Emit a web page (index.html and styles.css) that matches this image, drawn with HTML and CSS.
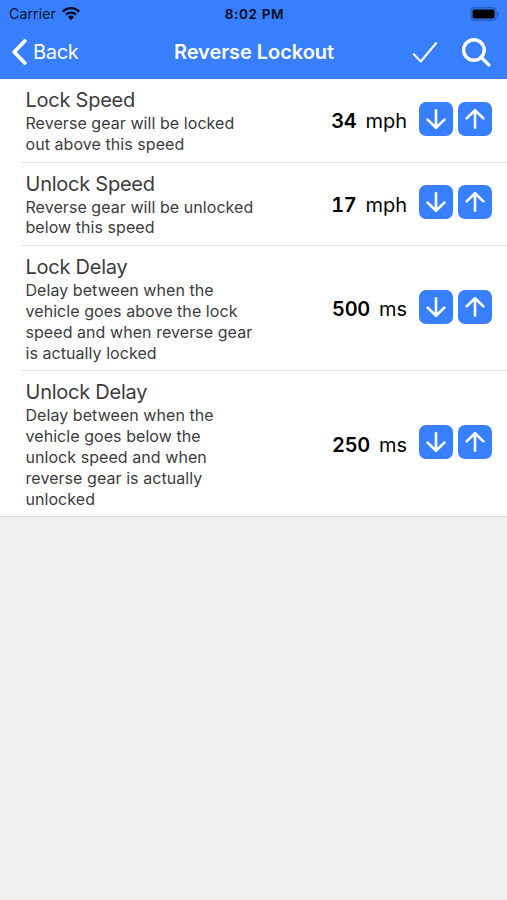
FILE: index.html
```html
<!DOCTYPE html>
<html lang="en">
<head>
<meta charset="utf-8">
<title>Reverse Lockout</title>
<link rel="stylesheet" href="styles.css">
</head>
<body>
<svg class="defs" width="0" height="0">
  <symbol id="down" viewBox="0 0 34 34"><path d="M17 8.300V25.500M8.600 17.600L17 25.800L25.400 17.600"/></symbol>
  <symbol id="up" viewBox="0 0 34 34"><path d="M17 25.700V8.500M8.600 16.400L17 8.200L25.400 16.400"/></symbol>
</svg>
<header class="header">
  <div class="status">
    <div class="carrier"><span class="carrier-name">Carrier</span>
      <svg class="wifi" width="20" height="15" viewBox="0 0 20 15"><path d="M1.800 5.600A11.500 11.500 0 0 1 18.200 5.600M4.900 8.700A7.300 7.300 0 0 1 15.100 8.700"/><path class="dot" d="M7 11A4.300 4.300 0 0 1 13 11L10 14.200Z"/></svg>
    </div>
    <div class="clock"><span class="clock-text">8:02 PM</span></div>
    <svg class="battery" width="30" height="14" viewBox="0 0 30 14"><rect class="shell" x="1" y=".8" width="25" height="12.400" rx="3.500"/><rect x="2.500" y="2.500" width="22" height="9" rx="1.800"/><path class="cap" d="M27.300 4.800Q29 5.500 29 7T27.300 9.200Z"/></svg>
  </div>
  <nav class="nav">
    <div class="back">
      <svg width="18" height="28" viewBox="0 0 18 28"><path d="M13.800 3L3.200 14L13.800 25"/></svg>
      <span class="back-text">Back</span>
    </div>
    <h1 class="title"><span class="title-text">Reverse Lockout</span></h1>
    <div class="actions">
      <svg class="check" width="26" height="24" viewBox="0 0 26 24"><path d="M1.800 14.200L8.800 21.500L24.200 3"/></svg>
      <svg class="search" width="30" height="30" viewBox="0 0 30 30"><circle cx="12.900" cy="13" r="10.300"/><path d="M20.300 20.400L27.800 27.900"/></svg>
    </div>
  </nav>
</header>
<main class="list">
  <section class="row">
    <div class="text"><h2 class="name">Lock Speed</h2><p class="desc">Reverse gear will be locked<br>out above this speed</p></div>
    <div class="value"><b class="number">34</b><span class="unit">mph</span></div>
    <div class="buttons"><button class="step" aria-label="Decrease"><svg><use href="#down"/></svg></button><button class="step" aria-label="Increase"><svg><use href="#up"/></svg></button></div>
  </section>
  <section class="row">
    <div class="text"><h2 class="name">Unlock Speed</h2><p class="desc">Reverse gear will be unlocked<br>below this speed</p></div>
    <div class="value"><b class="number">17</b><span class="unit">mph</span></div>
    <div class="buttons"><button class="step" aria-label="Decrease"><svg><use href="#down"/></svg></button><button class="step" aria-label="Increase"><svg><use href="#up"/></svg></button></div>
  </section>
  <section class="row">
    <div class="text"><h2 class="name">Lock Delay</h2><p class="desc">Delay between when the<br>vehicle goes above the lock<br>speed and when reverse gear<br>is actually locked</p></div>
    <div class="value"><b class="number">500</b><span class="unit">ms</span></div>
    <div class="buttons"><button class="step" aria-label="Decrease"><svg><use href="#down"/></svg></button><button class="step" aria-label="Increase"><svg><use href="#up"/></svg></button></div>
  </section>
  <section class="row">
    <div class="text"><h2 class="name">Unlock Delay</h2><p class="desc">Delay between when the<br>vehicle goes below the<br>unlock speed and when<br>reverse gear is actually<br>unlocked</p></div>
    <div class="value"><b class="number">250</b><span class="unit">ms</span></div>
    <div class="buttons"><button class="step" aria-label="Decrease"><svg><use href="#down"/></svg></button><button class="step" aria-label="Increase"><svg><use href="#up"/></svg></button></div>
  </section>
</main>
</body>
</html>
```
FILE: styles.css
```css
* { box-sizing: border-box; }
body {
  margin: 0;
  min-height: 900px;
  background: #f0f0f0;
  font-family: Inter, "Liberation Sans", sans-serif;
  color: #000;
}
.defs { display: block; }
h1, h2, p { margin: 0; font-weight: 400; }
svg { flex: none; fill: none; stroke-linecap: round; stroke-linejoin: round; }

.header { height: 79px; background: #387ffe; }
.status {
  display: grid;
  grid-template-columns: 1fr auto 1fr;
  align-items: center;
  height: 27px;
  padding: 0 7px 0 9px;
  color: #06142e;
}
.carrier { display: flex; align-items: center; gap: 5px; font-size: 14px; letter-spacing: .15px; }
.clock { font-size: 13.600px; font-weight: 600; letter-spacing: .6px; color: #030c20; }
.wifi { stroke: #030c20; stroke-width: 2.400; stroke-linecap: butt; }
.wifi .dot { fill: #030c20; stroke: none; }
.battery { justify-self: end; fill: #000; }
.battery .shell { fill: none; stroke: #2358b4; stroke-width: 1.200; }
.battery .cap { fill: #2358b4; }

.nav {
  display: grid;
  grid-template-columns: 1fr auto 1fr;
  align-items: center;
  height: 50px;
  padding: 0 16px 0 17px;
  color: #fff;
}
.back { display: flex; align-items: center; gap: 4px; margin-left: -6px; font-size: 20px; letter-spacing: -.3px; }
.back svg { stroke: #fff; stroke-width: 3.800; }
.title { font-size: 20px; font-weight: 600; letter-spacing: -.05px; }
.actions { display: flex; justify-content: flex-end; align-items: center; gap: 23px; }
.actions svg { stroke: #fff; }
.check { stroke-width: 2; }
.search { stroke-width: 3.400; }

.list { background: #fff; border-bottom: 1px solid #dcdcdc; }
.row {
  display: flex;
  align-items: center;
  margin-left: 21px;
  padding: 8px 15px 7px 4.500px;
  border-bottom: 1px solid #e6e6e6;
}
.row:last-child { border-bottom: 0; }
.text { flex: 1; color: #3c3c3c; }
.name { font-size: 20px; line-height: 26px; letter-spacing: -.25px; }
.desc { font-size: 16px; line-height: 20.800px; letter-spacing: .06px; }
.value {
  display: flex;
  align-items: baseline;
  gap: 9px;
  margin: 1px 12px 0 0;
  font-size: 20px;
}
.number { font-weight: 600; letter-spacing: -.3px; font-variant-numeric: tabular-nums; }
.buttons { display: flex; gap: 5px; margin-bottom: 4px; }
.step {
  display: block;
  width: 34px;
  height: 34px;
  padding: 0;
  border: 0;
  border-radius: 7px;
  background: #387ffe;
}
.step svg { display: block; width: 34px; height: 34px; stroke: #fff; stroke-width: 2.600; }
```
